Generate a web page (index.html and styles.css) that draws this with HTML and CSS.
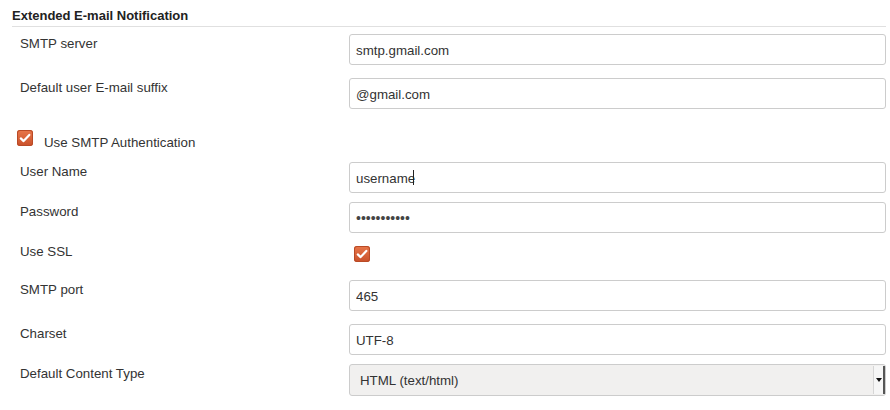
FILE: index.html
```html
<!DOCTYPE html>
<html>
<head>
<meta charset="utf-8">
<link rel="stylesheet" href="styles.css">
</head>
<body>
<div class="section">
  <div class="section-title">Extended E-mail Notification</div>
  <div class="rows">
    <div class="row gap-lg">
      <div class="label">SMTP server</div>
      <div class="field"><input class="text" type="text" value="smtp.gmail.com"></div>
    </div>
    <div class="row gap-cb">
      <div class="label">Default user E-mail suffix</div>
      <div class="field"><input class="text" type="text" value="@gmail.com"></div>
    </div>
    <div class="cb-row">
      <span class="checkbox"><svg viewBox="0 0 16 16" width="16" height="16"><path d="M3.8 8.4 L6.6 11.1 L12.3 4.9" fill="none" stroke="#fff" stroke-width="2.2" stroke-linecap="round" stroke-linejoin="round"/></svg></span>
      <span class="cb-label">Use SMTP Authentication</span>
    </div>
    <div class="row gap-sm">
      <div class="label">User Name</div>
      <div class="field caret-wrap"><input class="text" type="text" value="username"><span class="caret"></span></div>
    </div>
    <div class="row gap-sm">
      <div class="label">Password</div>
      <div class="field"><input class="text pw" type="password" value="abcdefghijk"></div>
    </div>
    <div class="row">
      <div class="label">Use SSL</div>
      <div class="cb-field"><span class="checkbox"><svg viewBox="0 0 16 16" width="16" height="16"><path d="M3.8 8.4 L6.6 11.1 L12.3 4.9" fill="none" stroke="#fff" stroke-width="2.2" stroke-linecap="round" stroke-linejoin="round"/></svg></span></div>
    </div>
    <div class="row gap-lg">
      <div class="label">SMTP port</div>
      <div class="field"><input class="text" type="text" value="465"></div>
    </div>
    <div class="row gap-sm">
      <div class="label">Charset</div>
      <div class="field"><input class="text" type="text" value="UTF-8"></div>
    </div>
    <div class="row">
      <div class="label">Default Content Type</div>
      <div class="field select-wrap">
        <select class="select"><option>HTML (text/html)</option></select>
        <span class="select-btn"><span class="arrow"></span></span>
      </div>
    </div>
  </div>
</div>
</body>
</html>
```
FILE: styles.css
```css
html, body {
  margin: 0;
  padding: 0;
  background: #fff;
}
body {
  font-family: "Liberation Sans", Arial, sans-serif;
  font-size: 13px;
  color: #333;
}
.section {
  padding: 0 4px 0 12px;
}
.section-title {
  font-weight: bold;
  color: #222;
  padding-top: 8px;
  height: 18px;
  line-height: 15px;
  border-bottom: 1px solid #e0e0e0;
}
.rows {
  padding-top: 7px;
}
.row {
  display: grid;
  grid-template-columns: 337px 1fr;
  align-items: start;
}
.gap-lg { margin-bottom: 13px; }
.gap-sm { margin-bottom: 9px; }
.gap-cb { margin-bottom: 21px; }
.label {
  padding-left: 8px;
  padding-top: 2px;
  line-height: 15px;
  font-size: 13.3px;
}
.field {
  height: 31px;
}
.text {
  box-sizing: border-box;
  width: 537px;
  height: 31px;
  margin: 0;
  border: 1px solid #ccc;
  border-radius: 3px;
  padding: 1px 6px 0;
  font-family: "Liberation Sans", Arial, sans-serif;
  font-size: 13.3px;
  color: #333;
  background: #fff;
  outline: none;
}
.pw {
  font-size: 14px;
  color: #444;
}
.caret-wrap {
  position: relative;
}
.caret {
  position: absolute;
  left: 64px;
  top: 8px;
  width: 1px;
  height: 15px;
  background: #222;
}
.cb-row {
  display: flex;
  align-items: center;
  height: 16px;
  padding-left: 5px;
  margin-bottom: 16px;
}
.cb-label {
  margin-left: 11px;
  line-height: 15px;
  padding-top: 8px;
  font-size: 13.3px;
}
.checkbox {
  display: inline-flex;
  width: 16px;
  height: 16px;
  border-radius: 3px;
  background: linear-gradient(#e8774a, #c9502a);
  box-shadow: inset 0 0 0 1px #b94a26;
}
.cb-field {
  box-sizing: border-box;
  height: 38px;
  padding-top: 4px;
  padding-left: 5px;
}
.select-wrap {
  position: relative;
  height: 32px;
  width: 537px;
}
.select {
  -webkit-appearance: none;
  appearance: none;
  box-sizing: border-box;
  width: 537px;
  height: 32px;
  margin: 0;
  border: 1px solid #ccc;
  border-radius: 3px;
  padding: 0 10px;
  font-family: "Liberation Sans", Arial, sans-serif;
  font-size: 13.3px;
  color: #333;
  background: #f1f0ef;
  outline: none;
}
.select-btn {
  position: absolute;
  right: 1px;
  top: 2px;
  bottom: 2px;
  width: 9px;
  background: #f6f6f6;
  border-left: 1px solid #d6d6d6;
  border-right: 2px solid #555;
  display: flex;
  align-items: center;
  justify-content: center;
}
.arrow {
  width: 0;
  height: 0;
  border-left: 3px solid transparent;
  border-right: 3px solid transparent;
  border-top: 4px solid #111;
}
```
